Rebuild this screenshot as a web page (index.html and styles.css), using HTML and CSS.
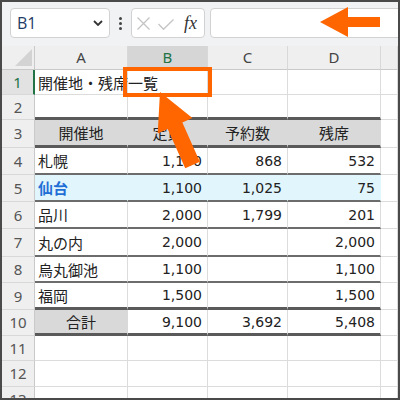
FILE: index.html
```html
<!DOCTYPE html>
<html lang="ja">
<head>
<meta charset="utf-8">
<link rel="stylesheet" href="styles.css">
</head>
<body>
<div class="frame">
  <div class="toolbar">
    <div class="namebox">
      <span class="ref">B1</span>
      <svg class="chev" width="10" height="6" viewBox="0 0 10 6"><polyline points="1,1 5,5 9,1" fill="none" stroke="#333" stroke-width="1.8"/></svg>
    </div>
    <div class="kebab"><i></i><i></i><i></i></div>
    <div class="fbtns">
      <svg class="xic" width="13" height="13" viewBox="0 0 13 13"><path d="M0.5 0.5 L12.5 12.5 M12.5 0.5 L0.5 12.5" stroke="#c4c4c4" stroke-width="1.3" fill="none"/></svg>
      <svg class="ckic" width="16" height="11" viewBox="0 0 16 11"><polyline points="0.5,5 5.5,10.3 15.5,0.5" stroke="#c4c4c4" stroke-width="1.3" fill="none"/></svg>
      <span class="fx">fx</span>
    </div>
    <div class="finput"></div>
  </div>
  <div class="sheet">
    <div class="c corner"><span class="tri"></span></div>
    <div class="c ch">A</div>
    <div class="c ch sel">B</div>
    <div class="c ch">C</div>
    <div class="c ch">D</div>
    <div class="c ch"></div>

    <div class="c rh rsel">1</div>
    <div class="c t over">開催地・残席一覧</div>
    <div class="c"></div>
    <div class="c"></div>
    <div class="c"></div>
    <div class="c"></div>

    <div class="c rh">2</div>
    <div class="c b3"></div>
    <div class="c b3"></div>
    <div class="c b3"></div>
    <div class="c b3"></div>
    <div class="c"></div>

    <div class="c rh">3</div>
    <div class="c t hd b3">開催地</div>
    <div class="c t hd b3">定員</div>
    <div class="c t hd b3">予約数</div>
    <div class="c t hd b3">残席</div>
    <div class="c"></div>

    <div class="c rh">4</div>
    <div class="c t b2">札幌</div>
    <div class="c n b2">1,100</div>
    <div class="c n b2">868</div>
    <div class="c n b2">532</div>
    <div class="c"></div>

    <div class="c rh">5</div>
    <div class="c t cy blue b2">仙台</div>
    <div class="c n cy b2">1,100</div>
    <div class="c n cy b2">1,025</div>
    <div class="c n cy b2">75</div>
    <div class="c"></div>

    <div class="c rh">6</div>
    <div class="c t b2">品川</div>
    <div class="c n b2">2,000</div>
    <div class="c n b2">1,799</div>
    <div class="c n b2">201</div>
    <div class="c"></div>

    <div class="c rh">7</div>
    <div class="c t b2">丸の内</div>
    <div class="c n b2">2,000</div>
    <div class="c n b2"></div>
    <div class="c n b2">2,000</div>
    <div class="c"></div>

    <div class="c rh">8</div>
    <div class="c t b2">烏丸御池</div>
    <div class="c n b2">1,100</div>
    <div class="c n b2"></div>
    <div class="c n b2">1,100</div>
    <div class="c"></div>

    <div class="c rh">9</div>
    <div class="c t b3">福岡</div>
    <div class="c n b3">1,500</div>
    <div class="c n b3"></div>
    <div class="c n b3">1,500</div>
    <div class="c"></div>

    <div class="c rh">10</div>
    <div class="c t hd b3">合計</div>
    <div class="c n b3">9,100</div>
    <div class="c n b3">3,692</div>
    <div class="c n b3">5,408</div>
    <div class="c"></div>

    <div class="c rh">11</div>
    <div class="c"></div><div class="c"></div><div class="c"></div><div class="c"></div><div class="c"></div>

    <div class="c rh">12</div>
    <div class="c"></div><div class="c"></div><div class="c"></div><div class="c"></div><div class="c"></div>

    <div class="c rh">13</div>
    <div class="c"></div><div class="c"></div><div class="c"></div><div class="c"></div><div class="c"></div>
  </div>
  <svg class="overlay" width="400" height="400" viewBox="0 0 400 400">
    <rect x="125" y="69" width="85" height="26" fill="none" stroke="#ff6600" stroke-width="4"/>
    <polygon points="320,22 348,7 348,17 380,17 380,27 348,27 348,37" fill="#ff6600"/>
    <polygon transform="translate(160,92) rotate(-24)" points="0,0 19,37 8,37 8,80 -8,80 -8,37 -19,37" fill="#ff6600"/>
  </svg>
</div>
</body>
</html>
```

FILE: styles.css
```css
body {
  margin: 0;
}

.frame {
  width: 400px;
  height: 400px;
  box-sizing: border-box;
  border: 2px solid #4a4a4a;
  position: relative;
  overflow: hidden;
  background: #fff;
  display: flex;
  flex-direction: column;
}

.toolbar {
  flex: none;
  height: 44px;
  box-sizing: border-box;
  background: #f1f2f3;
  display: flex;
  align-items: flex-start;
  padding: 6px 0 0 8px;
}

.namebox {
  width: 100px;
  height: 30px;
  box-sizing: border-box;
  background: #fff;
  border: 1px solid #d2d2d2;
  border-radius: 4px;
  display: flex;
  align-items: center;
  justify-content: space-between;
  padding: 0 6px 0 6px;
}

.ref {
  font-family: "Open Sans", "Noto Sans", sans-serif;
  font-size: 16px;
  color: #223a66;
}

.chev {
  display: block;
}

.kebab {
  width: 21px;
  height: 30px;
  display: flex;
  flex-direction: column;
  align-items: center;
  justify-content: center;
  gap: 2px;
}

.kebab i {
  display: block;
  width: 3px;
  height: 3px;
  border-radius: 50%;
  background: #444;
}

.fbtns {
  width: 74px;
  height: 30px;
  box-sizing: border-box;
  background: #fff;
  border: 1px solid #d2d2d2;
  border-radius: 4px;
  display: flex;
  align-items: center;
  padding-left: 5px;
}

.xic {
  display: block;
}

.ckic {
  display: block;
  margin-left: 8px;
  margin-top: 2px;
}

.fx {
  margin-left: 10px;
  font-family: "Liberation Serif", serif;
  font-style: italic;
  font-size: 18px;
  color: #333;
  line-height: 1;
}

.finput {
  flex: 1;
  height: 30px;
  box-sizing: border-box;
  margin-left: 5px;
  margin-right: -6px;
  background: #fff;
  border: 1px solid #d2d2d2;
  border-radius: 4px;
}

.sheet {
  flex: 1;
  display: grid;
  grid-template-columns: 33px 93px 80px 80px 93px 1fr;
  grid-template-rows: 24px 25px 25px 28px 27px 27px 27px 28px 26px 27px 26px 25px 26px 26px;
  font-family: "DejaVu Sans", "Noto Sans CJK JP", sans-serif;
  font-size: 14px;
  color: #222;
  overflow: hidden;
}

.c {
  box-sizing: border-box;
  border-right: 1px solid #dcdcdc;
  border-bottom: 1px solid #dcdcdc;
  display: flex;
  align-items: center;
  line-height: 1;
  min-width: 0;
}

.corner {
  background: #efefef;
  border-right-color: #c9c9c9;
  border-bottom-color: #c9c9c9;
  position: relative;
}

.tri {
  position: absolute;
  right: 2px;
  bottom: 3px;
  width: 0;
  height: 0;
  border-left: 17px solid transparent;
  border-bottom: 17px solid #d3d3d3;
}

.ch {
  background: #efefef;
  border-bottom-color: #c9c9c9;
  border-right-color: #d8d8d8;
  justify-content: center;
  font-family: "Noto Sans", sans-serif;
  font-size: 15px;
  color: #444;
}

.ch.sel {
  background: #d6d6d6;
  color: #217346;
}

.rh {
  background: #efefef;
  border-right-color: #c9c9c9;
  border-bottom-color: #d8d8d8;
  justify-content: center;
  font-family: "Noto Sans", sans-serif;
  font-size: 15px;
  color: #555;
}

.rh.rsel {
  background: #e2e2e2;
  color: #217346;
  border-right: 2px solid #217346;
}

.t {
  font-family: "Noto Sans CJK JP", sans-serif;
  font-size: 15px;
  padding-left: 3px;
  white-space: nowrap;
}

.over {
  overflow: visible;
  position: relative;
  z-index: 1;
}

.n {
  justify-content: flex-end;
  padding-right: 5px;
}

.hd {
  background: #d9d9d9;
  border-right-color: #d9d9d9;
  justify-content: center;
  padding-left: 0;
}

.cy {
  background: #e1f5fc;
  border-right-color: #e1f5fc;
}

.blue {
  color: #1f6fd6;
  font-weight: bold;
}

.b2 {
  border-bottom: 2px solid #6c6c6c;
}

.b3 {
  border-bottom: 3px solid #5a5a5a;
}

.overlay {
  position: absolute;
  top: -2px;
  left: -2px;
  z-index: 5;
  pointer-events: none;
}
```
